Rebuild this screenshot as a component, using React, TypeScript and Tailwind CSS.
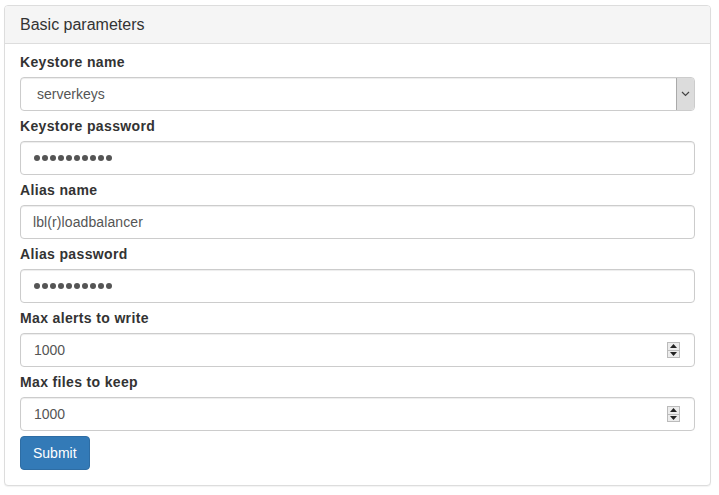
const fields = [
  { label: "Keystore name", kind: "select", value: "serverkeys" },
  { label: "Keystore password", kind: "password", value: "" },
  { label: "Alias name", kind: "text", value: "lbl(r)loadbalancer" },
  { label: "Alias password", kind: "password", value: "" },
  { label: "Max alerts to write", kind: "number", value: "1000" },
  { label: "Max files to keep", kind: "number", value: "1000" },
];

function Dots() {
  return (
    <div className="flex items-center gap-[2px]">
      {Array.from({ length: 10 }).map((_, i) => (
        <span key={i} className="block h-[6px] w-[6px] rounded-full bg-[#555]" />
      ))}
    </div>
  );
}

function Spinner() {
  return (
    <div className="flex h-[16px] w-[13px] flex-col border border-[#bbb] bg-[#ececec]">
      <div className="flex flex-1 items-center justify-center border-b border-[#bbb]">
        <svg width="7" height="4" viewBox="0 0 7 4">
          <path d="M0 4 L3.5 0 L7 4 Z" fill="#222" />
        </svg>
      </div>
      <div className="flex flex-1 items-center justify-center">
        <svg width="7" height="4" viewBox="0 0 7 4">
          <path d="M0 0 L3.5 4 L7 0 Z" fill="#222" />
        </svg>
      </div>
    </div>
  );
}

function Field({ kind, value }: { kind: string; value: string }) {
  const base =
    "flex h-[34px] w-full items-center rounded-[4px] border border-[#ccc] bg-white text-[14px] text-[#555] shadow-[inset_0_1px_1px_rgba(0,0,0,0.075)]";
  if (kind === "select") {
    return (
      <div className={base + " pl-[16px]"}>
        <span className="flex-1">{value}</span>
        <div className="flex h-full w-[18px] items-center justify-center rounded-r-[3px] border-l border-[#aaa] bg-[#dcdcdc]">
          <svg width="9" height="6" viewBox="0 0 9 6">
            <path d="M1 1 L4.5 4.5 L8 1" stroke="#444" strokeWidth="1.2" fill="none" />
          </svg>
        </div>
      </div>
    );
  }
  if (kind === "password") {
    return (
      <div className={base + " px-[13px]"}>
        <Dots />
      </div>
    );
  }
  if (kind === "number") {
    return (
      <div className={base + " pl-[13px] pr-[14px]"}>
        <span className="flex-1">{value}</span>
        <Spinner />
      </div>
    );
  }
  return <div className={base + " px-[12px] tracking-[0.1px]"}>{value}</div>;
}

export default function App() {
  return (
    <div className="min-h-[495px] bg-white pl-[4px] pt-[5px] font-['Liberation_Sans',Arial,sans-serif] text-[#333]">
      <div className="w-[707px] rounded-[4px] border border-[#ddd] bg-white shadow-[0_1px_1px_rgba(0,0,0,0.05)]">
        <div className="h-[38px] rounded-t-[3px] border-b border-[#ddd] bg-[#f5f5f5] px-[15px] pt-[9px] text-[16px] leading-[20px]">
          Basic parameters
        </div>
        <div className="flex flex-col px-[15px] pb-[15px] pt-[8px]">
          {fields.map((f) => (
            <div key={f.label} className="mb-[5px] flex flex-col">
              <label className="mb-[5px] text-[14px] font-bold leading-[20px] tracking-[0.35px]">{f.label}</label>
              <Field kind={f.kind} value={f.value} />
            </div>
          ))}
          <div>
            <button className="h-[34px] rounded-[4px] border border-[#2e6da4] bg-[#337ab7] px-[12px] text-[14px] text-white">
              Submit
            </button>
          </div>
        </div>
      </div>
    </div>
  );
}
